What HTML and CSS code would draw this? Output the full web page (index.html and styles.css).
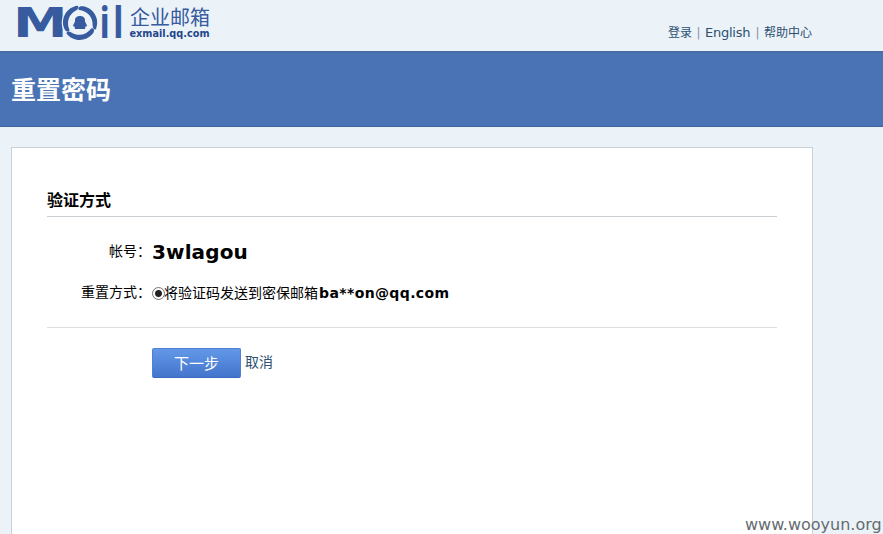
FILE: index.html
```html
<!DOCTYPE html>
<html lang="zh-CN">
<head>
<meta charset="utf-8">
<title>重置密码</title>
<link rel="stylesheet" href="styles.css">
</head>
<body>
<header class="header">
  <svg class="logo" width="196" height="51" viewBox="16 0 196 51">
    <g class="logo-word">
      <text class="logo-m" transform="translate(13 37.3) scale(1.37 1)" font-size="40">M</text>
      <text transform="translate(99.4 38) scale(.8 1)" font-size="42.5">i</text>
      <text transform="translate(112.9 38) scale(.8 1)" font-size="43.5">l</text>
    </g>
    <circle cx="80" cy="22.8" r="18.3" fill="#ebf3f9"/>
    <g fill="#375b9e">
      <path d="M77.5 5.8C67 7 60.500 18 64 28C65.500 32 68.500 32.500 69.500 30C66 22 69 14 76 10.500C78 9.300 79.500 7 77.500 5.800Z"/>
      <path d="M77.5 5.8C67 7 60.500 18 64 28C65.500 32 68.500 32.500 69.500 30C66 22 69 14 76 10.500C78 9.300 79.500 7 77.500 5.800Z" transform="rotate(120 80 22.8)"/>
      <path d="M77.5 5.8C67 7 60.500 18 64 28C65.500 32 68.500 32.500 69.500 30C66 22 69 14 76 10.500C78 9.300 79.500 7 77.500 5.800Z" transform="rotate(240 80 22.8)"/>
      <path d="M75 20C75 14.800 85 14.800 85 20V21.500L87.200 26L85.500 26.500L85 29H75L74.500 26.500L72.800 26L75 21.500Z"/>
    </g>
    <text class="logo-cn" x="130" y="25.2">企业邮箱</text>
    <text class="logo-domain" x="129.5" y="37" textLength="80" lengthAdjust="spacingAndGlyphs">exmail.qq.com</text>
  </svg>
  <nav class="links"><a>登录</a><i>|</i><a class="english">English</a><i>|</i><a>帮助中心</a></nav>
</header>
<div class="banner"><h1>重置密码</h1></div>
<main class="panel">
  <h2>验证方式</h2>
  <div class="row account"><span class="label">帐号：</span><strong>3wlagou</strong></div>
  <div class="row method"><span class="label">重置方式：</span><span class="radio"></span><span class="choice">将验证码发送到密保邮箱</span><b>ba**on@qq.com</b></div>
  <div class="actions"><button>下一步</button><a>取消</a></div>
</main>
<div class="watermark">www.wooyun.org</div>
</body>
</html>
```
FILE: styles.css
```css
* { box-sizing: border-box; }
body {
  display: flex;
  flex-direction: column;
  margin: 0;
  height: 534px;
  overflow: hidden;
  background: #ebf3f9;
  color: #000;
  font-family: "DejaVu Sans", "Noto Sans CJK SC", sans-serif;
  font-size: 14px;
}
.header {
  flex: none;
  height: 51px;
  display: flex;
  justify-content: space-between;
  padding: 0 71px 0 16px;
}
.logo { display: block; overflow: visible; }
.logo-word { fill: #375b9e; font-family: "Open Sans", sans-serif; font-weight: bold; }
.logo-m { font-family: "DejaVu Sans", sans-serif; }
.logo-cn { fill: #375b9e; font-family: "Noto Sans CJK SC", sans-serif; font-size: 20px; }
.logo-domain { fill: #24478a; font-family: "DejaVu Sans", sans-serif; font-size: 10.5px; font-weight: bold; }
.links {
  display: flex;
  padding-top: 24px;
  line-height: 18px;
  font-size: 12px;
  color: #2c5070;
}
.links i { width: 13px; text-align: center; font-style: normal; color: #8a8f98; }
.english { width: 46px; font-size: 13px; letter-spacing: -.25px; white-space: nowrap; }
.banner {
  flex: none;
  height: 76px;
  padding: 22px 11px 0;
  background: #4a73b5;
  border-top: 1px solid #46699f;
  border-bottom: 1px solid #41639c;
  box-shadow: inset 0 1px #486eac;
}
h1 { margin: 0; color: #fff; font-size: 25px; line-height: 34px; }
.panel {
  flex: 1;
  width: 802px;
  margin: 20px 0 0 11px;
  padding: 40px 35px 0;
  background: #fff;
  border: 1px solid #c9d1d7;
  border-bottom: 0;
}
h2 {
  margin: 0;
  height: 29px;
  padding-top: 1px;
  font-size: 16px;
  line-height: 24px;
  border-bottom: 1px solid #c9cfd2;
}
.row { display: flex; align-items: center; white-space: nowrap; }
.label { position: relative; top: -2px; width: 105px; padding-right: 1px; text-align: right; }
.account { height: 30px; margin-top: 20px; }
.account strong { font-size: 20px; letter-spacing: .12px; }
.method { height: 50px; margin-top: 11px; padding-bottom: 19px; border-bottom: 1px solid #dedede; }
.radio {
  flex: none;
  width: 13px;
  height: 13px;
  border: 1px solid #777;
  border-radius: 50%;
  background: radial-gradient(circle, #222 0 3px, #fff 4px);
}
.choice { position: relative; top: -1px; left: -1px; width: 154px; }
.method b { font-size: 14px; letter-spacing: .38px; }
.actions { display: flex; margin: 20px 0 0 105px; line-height: 29px; }
button {
  width: 89px;
  height: 30px;
  padding: 0;
  border: 1px solid #4f80d2;
  border-bottom-color: #3b69bb;
  border-radius: 2px;
  background: linear-gradient(#6398e8, #4375cc);
  color: #fff;
  font: 15px/26px "Noto Sans CJK SC", sans-serif;
}
.actions a { margin-left: 4px; color: #2c5070; }
.watermark {
  position: absolute;
  left: 745px;
  top: 515px;
  color: #666b70;
  font: 16px/19px "DejaVu Sans", sans-serif;
  white-space: nowrap;
}
```
